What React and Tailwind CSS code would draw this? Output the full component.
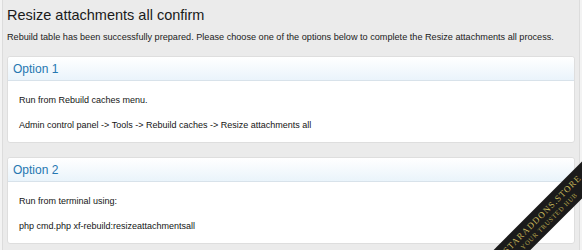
export default function App() {
  const font = { fontFamily: '"Liberation Sans", Arial, sans-serif' };

  return (
    <div className="w-[582px] h-[250px] overflow-hidden bg-[#f3f3f3] relative" style={font}>
      <div className="h-full mx-[2px] border-x border-[#dcdcdc] bg-[#ebebeb] px-[4px] pt-[6px]">
        <h1 className="text-[14.5px] leading-[18px] text-[#1a1a1a]">
          Resize attachments all confirm
        </h1>
        <p className="text-[9.15px] leading-[12px] text-[#222] mt-[7px]">
          Rebuild table has been successfully prepared. Please choose one of the options below to complete the Resize attachments all process.
        </p>

        <div className="mt-[13px] flex flex-col gap-[14px]">
          <OptionCard title="Option 1">
            <p>Run from Rebuild caches menu.</p>
            <p>Admin control panel -&gt; Tools -&gt; Rebuild caches -&gt; Resize attachments all</p>
          </OptionCard>
          <OptionCard title="Option 2">
            <p>Run from terminal using:</p>
            <p>php cmd.php xf-rebuild:resizeattachmentsall</p>
          </OptionCard>
        </div>
      </div>

      {/* corner ribbon */}
      <div
        className="absolute left-[445px] top-[204px] w-[200px] h-[26px] bg-[#1b1b1b] -rotate-45 flex flex-col items-center justify-center"
        style={{ fontFamily: '"Liberation Serif", serif' }}
      >
        <span className="text-[9px] leading-[11px] tracking-[1px] text-[#c9b85a]">
          STARADDONS.STORE
        </span>
        <span className="text-[6.5px] leading-[8px] tracking-[0.8px] text-[#b3a24a]">
          YOUR TRUSTED HUB
        </span>
      </div>
    </div>
  );
}

function OptionCard({ title, children }) {
  return (
    <div className="bg-white border border-[#dedede] rounded-[3px]">
      <div className="h-[24px] flex items-center px-[5px] bg-gradient-to-b from-white to-[#eaf4fb] border-b border-[#d8e2ea] rounded-t-[3px]">
        <h2 className="text-[12px] text-[#2577b1]">{title}</h2>
      </div>
      <div className="px-[11px] pt-[13px] pb-[11px] flex flex-col gap-[13px] text-[9px] leading-[12px] text-[#141414]">
        {children}
      </div>
    </div>
  );
}
